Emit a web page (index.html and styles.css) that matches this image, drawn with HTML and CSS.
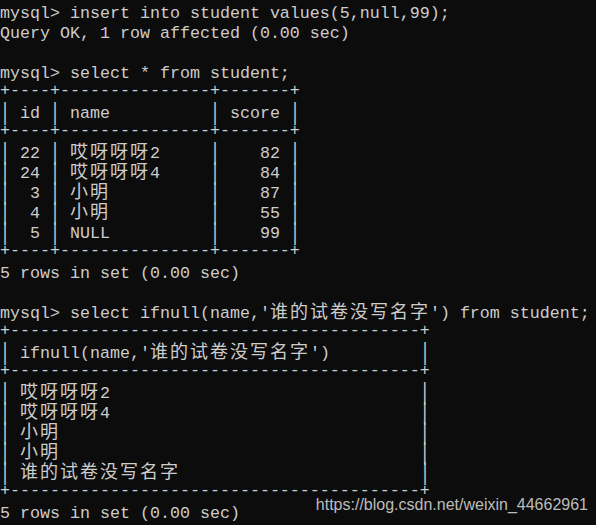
FILE: index.html
```html
<!DOCTYPE html>
<html>
<head>
<meta charset="utf-8">
<link rel="stylesheet" href="styles.css">
</head>
<body>
<div class="term">
<div class="ln">mysql&gt; insert into student values(5,null,99);</div>
<div class="ln">Query OK, 1 row affected (0.00 sec)</div>
<div class="ln"></div>
<div class="ln">mysql&gt; select * from student;</div>
<div class="ln bd">+----+---------------+-------+</div>
<div class="ln"><span class="v">|</span> id <span class="v">|</span> name          <span class="v">|</span> score <span class="v">|</span></div>
<div class="ln bd">+----+---------------+-------+</div>
<div class="ln"><span class="v">|</span> 22 <span class="v">|</span> <span class="w">哎呀呀呀</span>2     <span class="v">|</span>    82 <span class="v">|</span></div>
<div class="ln"><span class="v">|</span> 24 <span class="v">|</span> <span class="w">哎呀呀呀</span>4     <span class="v">|</span>    84 <span class="v">|</span></div>
<div class="ln"><span class="v">|</span>  3 <span class="v">|</span> <span class="w">小明</span>          <span class="v">|</span>    87 <span class="v">|</span></div>
<div class="ln"><span class="v">|</span>  4 <span class="v">|</span> <span class="w">小明</span>          <span class="v">|</span>    55 <span class="v">|</span></div>
<div class="ln"><span class="v">|</span>  5 <span class="v">|</span> NULL          <span class="v">|</span>    99 <span class="v">|</span></div>
<div class="ln bd">+----+---------------+-------+</div>
<div class="ln">5 rows in set (0.00 sec)</div>
<div class="ln"></div>
<div class="ln">mysql&gt; select ifnull(name,'<span class="w">谁的试卷没写名字</span>') from student;</div>
<div class="ln bd">+-----------------------------------------+</div>
<div class="ln"><span class="v">|</span> ifnull(name,'<span class="w">谁的试卷没写名字</span>')         <span class="v">|</span></div>
<div class="ln bd">+-----------------------------------------+</div>
<div class="ln"><span class="v">|</span> <span class="w">哎呀呀呀</span>2                               <span class="v">|</span></div>
<div class="ln"><span class="v">|</span> <span class="w">哎呀呀呀</span>4                               <span class="v">|</span></div>
<div class="ln"><span class="v">|</span> <span class="w">小明</span>                                    <span class="v">|</span></div>
<div class="ln"><span class="v">|</span> <span class="w">小明</span>                                    <span class="v">|</span></div>
<div class="ln"><span class="v">|</span> <span class="w">谁的试卷没写名字</span>                        <span class="v">|</span></div>
<div class="ln bd">+-----------------------------------------+</div>
<div class="ln">5 rows in set (0.00 sec)</div>
<div class="mark">https://blog.csdn.net/weixin_44662961</div>
</div>
</body>
</html>
```
FILE: styles.css
```css
html, body {
  margin: 0;
  padding: 0;
  background: #0c0c0c;
}
.term {
  position: relative;
  width: 596px;
  height: 525px;
  overflow: hidden;
  background: #0c0c0c;
  color: #cccccc;
  font-family: "Liberation Mono", monospace;
  font-size: 16.667px;
}
.ln {
  height: 20px;
  box-sizing: border-box;
  padding-top: 4px;
  line-height: 20px;
  white-space: pre;
}
.ln.bd {
  padding-top: 1px;
}
.v {
  display: inline-block;
  width: 10px;
  text-align: center;
  transform: scaleY(1.4);
}
.w {
  font-family: "Noto Sans CJK SC", sans-serif;
  font-size: 18px;
  line-height: 1px;
  letter-spacing: 2px;
}
.mark {
  position: absolute;
  right: 8px;
  top: 496px;
  font-family: "Liberation Sans", Arial, sans-serif;
  font-size: 16px;
  color: #bcbcbc;
  white-space: nowrap;
}
```
